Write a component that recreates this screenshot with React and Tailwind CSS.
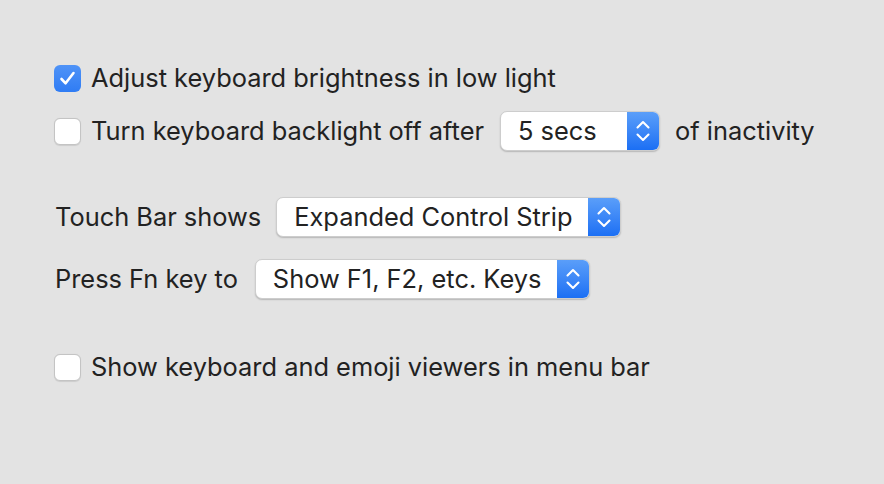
import React from 'react';

function Checkbox({ checked }) {
  if (checked) {
    return (
      <div className="w-[27px] h-[27px] rounded-[6px] bg-gradient-to-b from-[#4f93f7] to-[#2f7cf4] flex items-center justify-center shrink-0">
        <svg width="19" height="19" viewBox="0 0 19 19" fill="none">
          <path d="M3.5 10 L7.6 14.3 L15.5 4" stroke="white" strokeWidth="2.6" strokeLinecap="round" strokeLinejoin="round" />
        </svg>
      </div>
    );
  }
  return (
    <div className="w-[27px] h-[27px] rounded-[6px] bg-white border border-[#c4c4c4] shadow-[0_0.5px_1px_rgba(0,0,0,0.1)] shrink-0" />
  );
}

function Select({ value, width }) {
  return (
    <div
      className="h-[40px] flex items-stretch bg-white rounded-[7px] border border-[#cdcdcd] shadow-[0_1px_1.5px_rgba(0,0,0,0.2)] overflow-hidden shrink-0"
      style={{ width }}
    >
      <div className="flex-1 flex items-center pl-[17px] text-[#222]">{value}</div>
      <div className="w-[32px] bg-gradient-to-b from-[#5a9ef9] to-[#1b6ff4] flex items-center justify-center">
        <svg width="16" height="28" viewBox="0 0 16 28" fill="none">
          <path d="M2.5 10.5 L8 5 L13.5 10.5" stroke="white" strokeWidth="2.1" strokeLinecap="round" strokeLinejoin="round" />
          <path d="M2.5 17.5 L8 23 L13.5 17.5" stroke="white" strokeWidth="2.1" strokeLinecap="round" strokeLinejoin="round" />
        </svg>
      </div>
    </div>
  );
}

export default function App() {
  return (
    <div
      className="w-[884px] h-[484px] bg-[#e3e3e3] text-[#222] text-[25.4px] overflow-hidden whitespace-nowrap"
      style={{ fontFamily: 'Inter, "Noto Sans", sans-serif' }}
    >
      <div className="flex flex-col pt-[58px] pl-[54px]">
        <div className="h-[40px] flex items-center gap-[10px]">
          <Checkbox checked />
          <span>Adjust keyboard brightness in low light</span>
        </div>
        <div className="h-[40px] mt-[13px] flex items-center gap-[10px]">
          <Checkbox />
          <span>Turn keyboard backlight off after</span>
          <div className="ml-[6px] mr-[5px]">
            <Select value="5 secs" width={160} />
          </div>
          <span>of inactivity</span>
        </div>
        <div className="h-[40px] mt-[46px] flex items-center gap-[15px] pl-[1px]">
          <span>Touch Bar shows</span>
          <Select value="Expanded Control Strip" width={345} />
        </div>
        <div className="h-[40px] mt-[22px] flex items-center gap-[17px] pl-[1px]">
          <span>Press Fn key to</span>
          <Select value="Show F1, F2, etc. Keys" width={335} />
        </div>
        <div className="h-[40px] mt-[48px] flex items-center gap-[10px]">
          <Checkbox />
          <span>Show keyboard and emoji viewers in menu bar</span>
        </div>
      </div>
    </div>
  );
}
